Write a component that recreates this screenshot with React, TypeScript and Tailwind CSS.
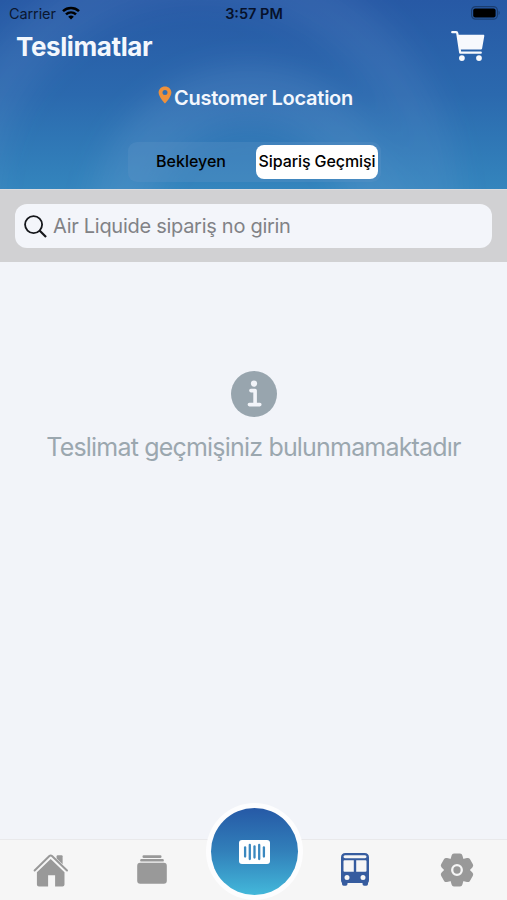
import React from 'react';

type IconProps = { className?: string };

const WifiIcon: React.FC<IconProps> = ({ className }) => (
  <svg viewBox="0 0 18 14" className={className} fill="none" stroke="currentColor" strokeWidth="2.6">
    <path d="M1 5.1C5.6.9 12.4.9 17 5.1" />
    <path d="M4 8.4c2.9-2.6 7.1-2.6 10 0" />
    <path d="M6.2 10.7c1.7-1.5 3.9-1.5 5.6 0L9 13.5z" fill="currentColor" stroke="none" />
  </svg>
);

const BatteryIcon: React.FC<IconProps> = ({ className }) => (
  <svg viewBox="0 0 29 14" className={className}>
    <rect x="0.6" y="0.6" width="25.8" height="12.6" rx="4" fill="none" stroke="#000" strokeOpacity="0.32" strokeWidth="1.2" />
    <rect x="2.2" y="2.4" width="22.4" height="9" rx="2" fill="#000" />
    <path d="M27.6 4.8c1.4.6 1.4 3.6 0 4.2z" fill="#000" fillOpacity="0.32" />
  </svg>
);

const CartIcon: React.FC<IconProps> = ({ className }) => (
  <svg viewBox="0 0 34 32" className={className} fill="#f7f9fd">
    <path
      d="M1.2 2.2h3.9c.7 0 1.100.4 1.200 1.100L9.200 22.700h20.600"
      fill="none"
      stroke="#f7f9fd"
      strokeWidth="2.200"
      strokeLinecap="round"
      strokeLinejoin="round"
    />
    <path d="M6.200 4.700h26c.8 0 1.200.5 1.100 1.200l-2.200 12.600c-.1.7-.5 1-1.200 1H8.700z" />
    <circle cx="10.900" cy="28.100" r="2.900" />
    <circle cx="28" cy="28.100" r="2.900" />
  </svg>
);

const PinIcon: React.FC<IconProps> = ({ className }) => (
  <svg viewBox="0 0 14 18" className={className}>
    <path
      fillRule="evenodd"
      fill="#ee913c"
      d="M7 .4C3.3.4.6 3 .6 6.5.6 10.900 7 17.500 7 17.500s6.400-6.600 6.400-11C13.400 3 10.700.4 7 .4Zm0 3.700a2.500 2.500 0 1 1 0 5 2.500 2.500 0 0 1 0-5Z"
    />
  </svg>
);

const SearchIcon: React.FC<IconProps> = ({ className }) => (
  <svg viewBox="0 0 24 24" className={className} fill="none" stroke="#15171b" strokeWidth="1.900">
    <circle cx="10" cy="10" r="8.900" />
    <path d="M16.200 16.200 23 22.900" strokeWidth="2.300" />
  </svg>
);

const InfoIcon: React.FC<IconProps> = ({ className }) => (
  <svg viewBox="0 0 46 46" className={className}>
    <circle cx="23" cy="23" r="23" fill="#98a5ae" />
    <circle cx="23" cy="12.600" r="3.100" fill="#f2f4f9" />
    <path d="M19.900 19.600h4.200v13.500M18.400 33.600h10.400" fill="none" stroke="#f2f4f9" strokeWidth="3.600" strokeLinecap="round" strokeLinejoin="round" />
  </svg>
);

const HomeIcon: React.FC<IconProps> = ({ className }) => (
  <svg viewBox="0 0 36 34" className={className} fill="#999">
    <path d="M1.600 17.500 16.400 3.100q1.300-1.200 2.600 0L34 17.500" fill="none" stroke="#999" strokeWidth="2" strokeLinecap="round" />
    <path d="M23.600 5.500V3.200q0-1 1-1h4q1 0 1 1v8.100z" />
    <path d="M17.700 6 31.500 19.300v12.200q0 2.100-2.100 2.100h-7.300V22.200h-7v11.400H6q-2.100 0-2.100-2.100V19.300z" />
  </svg>
);

const AlbumsIcon: React.FC<IconProps> = ({ className }) => (
  <svg viewBox="0 0 30 29" className={className} fill="#999">
    <rect x="5.500" y="0.300" width="19" height="2.600" rx="1.200" />
    <rect x="3.200" y="3.900" width="23.600" height="2.700" rx="1.200" />
    <rect x="0.200" y="7.700" width="29.600" height="21" rx="3" />
  </svg>
);

const BarcodeIcon: React.FC<IconProps> = ({ className }) => (
  <svg viewBox="0 0 31 24" className={className}>
    <rect width="31" height="24" rx="3" fill="#fff" />
    <g stroke="#3a88bf" strokeWidth="2.300" strokeLinecap="round">
      <path d="M6.100 7.500v9" />
      <path d="M10.800 5v14" />
      <path d="M15.500 6.500v11" />
      <path d="M20.200 5v14" />
      <path d="M24.900 7.500v9" />
    </g>
  </svg>
);

const BusIcon: React.FC<IconProps> = ({ className }) => (
  <svg viewBox="0 0 28 33" className={className}>
    <path
      fill="#365c9f"
      fillRule="evenodd"
      d="M4.500 0h19Q28 0 28 4.500V27q0 2-1 2.900v1.200q0 1.700-1.700 1.700h-2.100q-1.700 0-1.700-1.700v-1.200h-15v1.200q0 1.700-1.700 1.700H2.700q-1.700 0-1.700-1.700v-1.200Q0 29 0 27V4.500Q0 0 4.500 0ZM4 2.200Q2.500 2.200 2.500 3.800 2.500 5.200 4 5.200h20q1.500 0 1.500-1.400Q25.500 2.200 24 2.200ZM3.500 7.300q-1 0-1 1v9.400q0 1 1 1h9.300V7.300Zm11.700 0v11.400h9.300q1 0 1-1V8.300q0-1-1-1ZM6 22a2.500 2.500 0 1 0 0 5 2.500 2.500 0 0 0 0-5Zm16 0a2.500 2.500 0 1 0 0 5 2.500 2.500 0 0 0 0-5Z"
    />
  </svg>
);

const TOOTH = 'M-6.800-9.500-5.400-14.600Q-4.900-16.600-3-16.600h6q1.900 0 2.400 2L6.800-9.500z';

const GearIcon: React.FC<IconProps> = ({ className }) => (
  <svg viewBox="-17 -17 34 34" className={className}>
    <g fill="#999">
      <circle r="11.800" />
      {[0, 60, 120, 180, 240, 300].map((angle) => (
        <path key={angle} d={TOOTH} transform={`rotate(${angle})`} />
      ))}
    </g>
    <circle r="4.800" fill="none" stroke="#f6f6f6" strokeWidth="2.300" />
  </svg>
);

const StatusBar: React.FC = () => (
  <div className="grid h-[27px] grid-cols-3 items-center pl-[8px] pr-[7px] text-[14.500px] text-[#0b1730]">
    <div className="flex items-center gap-[6px] pl-px">
      <span className="tracking-[-0.100px]">Carrier</span>
      <WifiIcon className="mb-[2px] h-[14px] w-[18px] text-black" />
    </div>
    <span className="text-center font-semibold text-[#06112b]">3:57 PM</span>
    <BatteryIcon className="mb-px h-[14px] w-[29px] justify-self-end" />
  </div>
);

const Header: React.FC = () => (
  <header className="relative h-[189px] overflow-hidden bg-linear-to-b from-[#2759a5] via-[#2b69ae] to-[#3485bd]">
    {/* soft rings behind the title */}
    <svg viewBox="0 0 507 189" className="absolute inset-0 h-full w-full" fill="none">
      <defs>
        <filter id="soft" x="-20%" y="-20%" width="140%" height="140%">
          <feGaussianBlur stdDeviation="14" />
        </filter>
      </defs>
      <g filter="url(#soft)" stroke="#7fa6d6">
        <circle cx="250" cy="225" r="130" strokeWidth="60" strokeOpacity="0.18" />
        <circle cx="200" cy="205" r="232" strokeWidth="54" strokeOpacity="0.13" />
      </g>
    </svg>
    <div className="relative">
      <StatusBar />
      <div className="flex h-[39px] items-center justify-between pl-4 pr-[22px]">
        <h1 className="text-[26px] font-bold tracking-[-0.400px] text-[#f3f7fd]">Teslimatlar</h1>
        <CartIcon className="mb-[2px] h-[32px] w-[34px]" />
      </div>
      <div className="mt-[18px] flex h-7 justify-center gap-[2px] pl-[4px]">
        <PinIcon className="mt-[2px] h-[18px] w-[14px]" />
        <span className="text-[20px] font-semibold leading-7 tracking-[-0.250px] text-[#f3f7fd]">Customer Location</span>
      </div>
      <div className="ml-[128px] mt-[30px] flex h-[40px] w-[253px] items-center justify-between rounded-[9px] bg-[#5b93c6]/35 pr-[3px] text-[16px] font-medium text-black">
        <button className="w-[126px] pb-[2px] text-center">Bekleyen</button>
        <button className="h-[34px] w-[122px] whitespace-nowrap rounded-[8px] bg-white pb-[2px] text-center tracking-[-0.100px]">
          Sipariş Geçmişi
        </button>
      </div>
    </div>
  </header>
);

const TabBar: React.FC = () => (
  <nav className="relative grid h-[61px] grid-cols-5 items-center justify-items-center border-t border-[#e9e9eb] bg-[#f6f6f6]">
    <HomeIcon className="h-[34px] w-[36px]" />
    <AlbumsIcon className="mb-px h-[29px] w-[30px]" />
    {/* scan button rises above the bar */}
    <div className="absolute left-[206px] top-[-37px] flex size-[97px] items-center justify-center rounded-full bg-[#fdfdfe]">
      <button className="flex size-[87px] items-center justify-center rounded-full bg-linear-to-b from-[#2659a6] via-[#3280ba] to-[#43b8da]">
        <BarcodeIcon className="mt-px h-[24px] w-[31px]" />
      </button>
    </div>
    <BusIcon className="col-start-4 mb-px h-[33px] w-[28px]" />
    <GearIcon className="ml-px h-[34px] w-[34px]" />
  </nav>
);

const App: React.FC = () => {
  return (
    <div className="flex h-[900px] w-[507px] flex-col overflow-hidden bg-[#f2f4f9] font-['Inter','Liberation_Sans',sans-serif]">
      <Header />
      <div className="h-[73px] border-t border-[#dadbdf] bg-[#d1d1d3] px-[15px] pt-[14px]">
        <label className="flex h-[44px] items-center gap-[6px] rounded-xl bg-[#f3f5fa] pl-[9px]">
          <SearchIcon className="size-[23px]" />
          <span className="text-[20px] tracking-[-0.280px] text-[#818286]">Air Liquide sipariş no girin</span>
        </label>
      </div>
      <main className="flex flex-1 flex-col items-center pt-[109px]">
        <InfoIcon className="size-[46px]" />
        <p className="mt-[12px] whitespace-nowrap text-[25px] leading-9 tracking-[-0.810px] text-[#9ba7af]">
          Teslimat geçmişiniz bulunmamaktadır
        </p>
      </main>
      <TabBar />
    </div>
  );
};

export default App;
